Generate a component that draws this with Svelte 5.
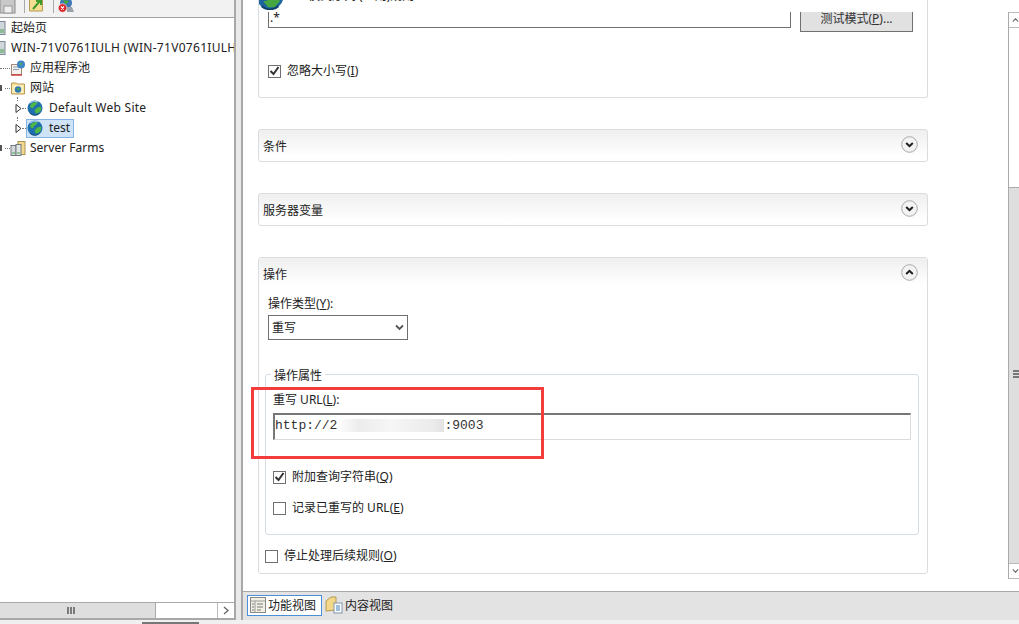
<script>
  const tree = [
    { id: 'pool', label: '应用程序池' },
    { id: 'sites', label: '网站' }
  ];
</script>

{#snippet chev(up)}
  <span class="chev">
    <svg width="17" height="17" viewBox="0 0 17 17">
      <circle cx="8.500" cy="8.500" r="7.800" fill="#f3f3f3" stroke="#a8a8a8"/>
      <path d={up ? 'M5.200 10l3.300-3.200 3.300 3.200' : 'M5.200 7l3.300 3.200 3.300-3.200'} stroke="#1e1e1e" stroke-width="2" fill="none"/>
    </svg>
  </span>
{/snippet}

{#snippet globe()}
  <svg class="globe" width="16" height="16" viewBox="0 0 17 17">
    <circle cx="8.500" cy="8.500" r="8" fill="#1f6fae"/>
    <path d="M3 6l3-3 4-1 1 2-3 2-2 3-2-1zM11 8l4-1 0 4-3 3-3 0-1-3z" fill="#4fb648"/>
    <path d="M3 3.500a8 8 0 0 1 9-1.500" stroke="#b4dcf5" fill="none"/>
    <path d="M3 14a8 8 0 0 0 10 .5" stroke="#0f4674" fill="none"/>
  </svg>
{/snippet}

<div class="app">
  <div class="upper">
    <aside class="left">
      <div class="toolbar">
        <svg class="tb floppy" width="16" height="14" viewBox="0 0 16 14"><rect x="0" y="-3" width="15" height="16" fill="#c8c8c8" stroke="#8c8c8c"/><rect x="4" y="6" width="8" height="7" fill="#efefef" stroke="#9a9a9a"/></svg>
        <i class="sep s1"></i>
        <svg class="tb folder" width="15" height="12" viewBox="0 0 15 12"><path d="M.5-2h13v13H.5z" fill="#f5dd92" stroke="#b49a54"/><path d="M4 9l7-8M7 1h5v4" stroke="#3f9a2d" stroke-width="2" fill="none"/></svg>
        <i class="sep s2"></i>
        <svg class="tb earth" width="16" height="14" viewBox="0 0 16 14"><circle cx="8" cy="3" r="6" fill="#3b78b8"/><path d="M5 0l6 1-3 4z" fill="#48a83f"/><path d="M9 7h5l2 5H9z" fill="#9aa3ad"/><circle cx="4.500" cy="8" r="4.300" fill="#d8262c" stroke="#fff" stroke-width="0.600"/><path d="M3 6.500l3 3M6 6.500l-3 3" stroke="#fff" stroke-width="1.200"/></svg>
      </div>
      <div class="tree">
        <div class="row top">
          <svg class="ic" width="16" height="16" viewBox="0 0 16 16"><rect x="7" y="1.500" width="8" height="13" fill="#cfd6dc" stroke="#7d8894"/><path d="M9 10h5M9 12h5" stroke="#4aa050"/></svg>
          <span class="t">起始页</span>
        </div>
        <div class="row top">
          <svg class="ic" width="16" height="16" viewBox="0 0 16 16"><rect x="7" y="1.500" width="8" height="13" fill="#cfd6dc" stroke="#7d8894"/><path d="M9 10h5M9 12h5" stroke="#4aa050"/></svg>
          <span class="t clip">WIN-71V0761IULH (WIN-71V0761IULH\Administrator)</span>
        </div>
        {#each tree as t}
          <div class="row node">
            {#if t.id === 'sites'}<i class="stub"></i><i class="dots d5"></i>{:else}<i class="dots"></i>{/if}
            {#if t.id === 'pool'}
              <svg width="16" height="16" viewBox="0 0 16 16"><rect x="1.500" y="4.500" width="10" height="10" fill="#f4f1ec" stroke="#a68a80"/><path d="M3 7h6M3 9.500h6" stroke="#8aa0b5"/><path d="M1 15h11" stroke="#c9403a" stroke-width="1.500"/><circle cx="11" cy="4.500" r="4" fill="#3c86c6"/><path d="M9 3h3l-1 3z" fill="#58b14a"/></svg>
            {:else}
              <svg width="16" height="16" viewBox="0 0 16 16"><path d="M1.500 3h5l1 1h7v10h-13z" fill="#f6dd96" stroke="#b79a55"/><path d="M2.500 5h11v8h-11z" fill="#fbeeb9"/><circle cx="8" cy="9.500" r="3.200" fill="#2f78b5"/><path d="M6.500 8h3l-1 3z" fill="#4fae45"/></svg>
            {/if}
            <span class="t l4">{t.label}</span>
          </div>
        {/each}
        <div class="row site">
          <svg class="tri" width="7" height="9" viewBox="0 0 7 9"><path d="M1 .5l5 4-5 4z" fill="#fff" stroke="#333"/></svg>
          <i class="dots short"></i>
          {@render globe()}
          <span class="lbl wide">Default Web Site</span>
        </div>
        <div class="row site">
          <svg class="tri" width="7" height="9" viewBox="0 0 7 9"><path d="M1 .5l5 4-5 4z" fill="#fff" stroke="#333"/></svg>
          <i class="dots short"></i>
          <span class="sel">
            {@render globe()}
            <span class="lbl">test</span>
          </span>
        </div>
        <div class="row node">
          <i class="stub"></i><i class="dots d5"></i>
          <svg width="16" height="16" viewBox="0 0 16 16"><rect x="8" y="1.500" width="7" height="13" fill="#f2d98e" stroke="#a89456"/><rect x="1" y="5.500" width="5" height="10" fill="#d7dadd" stroke="#70787f"/><rect x="6" y="4.500" width="5" height="11" fill="#e3e5e7" stroke="#70787f"/><path d="M2 13h3M7 13h3" stroke="#3fa648"/></svg>
          <span class="t l4">Server Farms</span>
        </div>
      </div>
      <div class="hbar">
        <div class="hthumb"><span class="grip"><i></i><i></i><i></i></span></div>
        <div class="htrack"></div>
        <div class="hbtn"><svg width="8" height="9" viewBox="0 0 8 9"><path d="M2 1l4 3.500-4 3.500" stroke="#666" stroke-width="1.300" fill="none"/></svg></div>
      </div>
    </aside>

    <main class="main">
      <div class="scroll">
        <div class="col">
          <section class="card first">
            <div class="pattern-head">
              <svg class="bigglobe" width="28" height="28" viewBox="0 0 30 30"><circle cx="15" cy="15" r="14.500" fill="#1e659f"/><path d="M5 12l8-6 6 4-4 6-6 1zM8 21l12-4 6 3-6 7-7 0z" fill="#46a640"/><path d="M6 26a14 14 0 0 0 18 0" stroke="#0e3f6b" stroke-width="2" fill="none"/></svg>
              <span class="cliptext">模式序列 (正则)规则</span>
            </div>
            <div class="pattern-row">
              <div class="input">.*</div>
              <div class="btn">测试模式(<u>P</u>)...</div>
            </div>
            <label class="check ignore"><span class="box on"><svg width="11" height="10" viewBox="0 0 11 10"><path d="M1.500 5l3 3 5-7" stroke="#333" stroke-width="2" fill="none"/></svg></span><span>忽略大小写(<u>I</u>)</span></label>
          </section>

          <section class="card bar"><span>条件</span>{@render chev(false)}</section>
          <section class="card bar"><span>服务器变量</span>{@render chev(false)}</section>

          <section class="card action">
            <div class="bar inner"><span>操作</span>{@render chev(true)}</div>
            <div class="body">
              <div class="fl">操作类型(<u>Y</u>):</div>
              <div class="select"><span>重写</span><svg width="9" height="7" viewBox="0 0 9 7"><path d="M1 1.500l3.500 3.500 3.500-3.500" stroke="#555" stroke-width="1.800" fill="none"/></svg></div>
              <fieldset class="props">
                <legend>操作属性</legend>
                <div class="fl url">重写 URL(<u>L</u>):</div>
                <div class="urlinput"><span class="mono">http://2</span><span class="blur"></span><span class="mono">:9003</span></div>
                <label class="check c1"><span class="box on"><svg width="11" height="10" viewBox="0 0 11 10"><path d="M1.500 5l3 3 5-7" stroke="#333" stroke-width="2" fill="none"/></svg></span><span>附加查询字符串(<u>Q</u>)</span></label>
                <label class="check c2"><span class="box"></span><span>记录已重写的 URL(<u>E</u>)</span></label>
              </fieldset>
              <label class="check c3"><span class="box"></span><span>停止处理后续规则(<u>O</u>)</span></label>
            </div>
          </section>
        </div>
        <div class="vbar">
          <div class="vbtn"><svg width="9" height="6" viewBox="0 0 9 6"><path d="M1 5l3.500-3.500 3.500 3.500" stroke="#666" stroke-width="1.300" fill="none"/></svg></div>
          <div class="vtrack"></div>
          <div class="vthumb"><span class="vgrip"><i></i><i></i><i></i></span></div>
          <div class="vbtn"><svg width="9" height="6" viewBox="0 0 9 6"><path d="M1 1l3.500 3.500 3.500-3.500" stroke="#666" stroke-width="1.300" fill="none"/></svg></div>
        </div>
        <div class="redbox"></div>
      </div>
      <div class="tabs">
        <div class="tab active">
          <svg width="16" height="16" viewBox="0 0 16 16"><rect x=".5" y=".5" width="15" height="15" fill="#f2f0e4" stroke="#888"/><path d="M.5 4h15M5 4v12" stroke="#999"/><path d="M7 7h6M7 10h6M7 13h4M2 7h2M2 10h2M2 13h2" stroke="#777"/></svg>
          <span>功能视图</span>
        </div>
        <div class="tab">
          <svg width="18" height="18" viewBox="0 0 18 18"><path d="M1 15V5l5-4h5v13z" fill="#f3d88a" stroke="#b59a55"/><rect x="9" y="7" width="8" height="10" fill="#fff" stroke="#7f95ad"/><path d="M11 10h4M11 12h4M11 14h4" stroke="#3f7fbf"/></svg>
          <span>内容视图</span>
        </div>
      </div>
    </main>
  </div>
  <div class="status"><i></i></div>
</div>

<style>
  :global(body) { margin: 0; }
  .app {
    width: 1019px; height: 624px; overflow: hidden;
    display: flex; flex-direction: column;
    background: #e9e9e9;
    font: 12px/16px "Noto Sans", "Noto Sans CJK SC", sans-serif;
    color: #222;
  }
  u { text-underline-offset: 1px; }
  .upper { flex: 0 0 620px; display: flex; min-height: 0; }

  .left { width: 234px; flex: none; display: flex; flex-direction: column; background: #fff; border-right: 2px solid #a8a8a8; }
  .toolbar { height: 18px; flex: none; display: flex; align-items: flex-start; border-bottom: 1px solid #a4a4a4; box-sizing: border-box; background: #f2f2f2; overflow: hidden; }
  .tb { flex: none; }
  .sep { width: 1px; height: 13px; background: #a9a9a9; flex: none; }
  .s1 { margin-left: 8px; }
  .folder { margin-left: 4px; }
  .s2 { margin-left: 9px; }
  .earth { margin-left: 4px; }
  .tree { flex: 1; overflow: hidden; }
  .row { display: flex; align-items: center; white-space: nowrap; height: 20px; }
  .top { margin-left: -10px; }
  .ic { flex: none; }
  .t { margin-left: 5px; }
  .l4 { margin-left: 4px; }
  .clip { overflow: hidden; letter-spacing: .3px; }
  .dots { display: inline-block; width: 10px; border-top: 1px dotted #777; flex: none; }
  .stub { width: 2px; height: 6px; background: #555; flex: none; margin-right: 3px; }
  .d5 { width: 5px; }
  .short { width: 4px; margin: 0 1px 0 0; }
  .site { padding-left: 15px; position: relative; }
  .site::before { content: ""; position: absolute; left: 17px; top: -1px; height: 4px; border-left: 1px dotted #777; }
  .tri { flex: none; }
  .globe { flex: none; }
  .lbl { margin-left: 6px; }
  .wide { letter-spacing: .25px; }
  .sel { display: inline-flex; align-items: center; height: 19px; width: 48px; background: #cfe3f8; border: 1px solid #85b3e4; box-sizing: border-box; margin-left: -1px; }
  .hbar { height: 18px; flex: none; display: flex; border-top: 1px solid #a8a8a8; border-bottom: 2px solid #a8a8a8; box-sizing: border-box; }
  .hthumb { width: 156px; background: #dedede; border-right: 1px solid #aaa; display: flex; align-items: center; padding-left: 67px; box-sizing: border-box; }
  .grip { display: flex; gap: 1px; }
  .grip i { width: 2px; height: 7px; background: #7a7a7a; }
  .htrack { flex: 1; background: #fff; }
  .hbtn { width: 16px; flex: none; display: flex; align-items: center; justify-content: center; border-left: 1px solid #bbb; background: #fff; }

  .main { flex: 1; min-width: 0; display: flex; flex-direction: column; margin-left: 5px; border-left: 2px solid #a8a8a8; }
  .scroll { flex: 0 0 592px; display: flex; background: #fff; border-bottom: 1px solid #a8a8a8; box-sizing: border-box; position: relative; overflow: hidden; }
  .col { width: 670px; margin-left: 15px; flex: none; display: flex; flex-direction: column; gap: 31px; }
  .card { border: 1px solid #d9dde0; border-radius: 3px; background: #fff; box-sizing: border-box; }
  .first { height: 98px; border-top: none; border-radius: 0 0 3px 3px; position: relative; }
  .pattern-head { height: 12px; overflow: hidden; position: relative; }
  .bigglobe { position: absolute; left: -3px; top: -18px; }
  .cliptext { position: absolute; left: 49px; top: -12px; }
  .pattern-row { display: flex; align-items: flex-start; padding-left: 9px; gap: 9px; }
  .input { width: 523px; height: 16px; border: 1px solid #707070; border-top: none; box-sizing: border-box; line-height: 12px; padding-left: 1px; }
  .btn { width: 113px; height: 20px; border: 1px solid #707070; border-top: none; background: #e1e1e1; box-sizing: border-box; text-align: center; line-height: 14px; color: #333; }
  .check { display: flex; align-items: center; gap: 6px; height: 16px; }
  .box { width: 13px; height: 13px; border: 1px solid #707070; box-sizing: border-box; display: flex; align-items: center; justify-content: center; background: #fff; flex: none; }
  .ignore { margin: 31px 0 0 9px; }

  .bar { height: 33px; display: flex; align-items: center; justify-content: space-between; padding: 2px 9px 0 4px;
    background: linear-gradient(#efefef, #fff 85%); box-sizing: border-box; }
  .chev { display: flex; margin-top: -5px; }
  .action { height: 317px; }
  .inner { height: 32px; }
  .body { padding: 6px 0 0 9px; }
  .fl { height: 16px; }
  .select { width: 140px; height: 25px; margin-top: 3px; border: 1px solid #707070; box-sizing: border-box; display: flex; align-items: center; justify-content: space-between; padding: 0 3px; }
  .props { margin: 25px 8px 0 -3px; padding: 9px 6px 0 7px; height: 170px; border: 1px solid #d5dde5; border-radius: 3px; box-sizing: border-box; }
  .props legend { padding: 4px 3px 0; margin-left: -2px; line-height: 14px; }
  .url { margin-top: 0; }
  .urlinput { width: 638px; height: 27px; margin: 5px 0 0; border: 1px solid #dcdcdc; border-top: 2px solid #777; border-left: 2px solid #777; box-sizing: border-box; display: flex; align-items: center; padding-bottom: 3px; }
  .mono { font: 13px "Liberation Mono", monospace; color: #333; }
  .blur { width: 107px; height: 13px; background: linear-gradient(90deg, #fff, #ececec 20%, #f6f6f6 50%, #ebebeb 90%, #e3e3e3); }
  .c1 { margin-top: 29px; }
  .c2 { margin-top: 15px; }
  .c3 { margin: 13px 0 0 -3px; }

  .vbar { position: absolute; right: 0; top: 12px; bottom: 12px; width: 10px; display: flex; flex-direction: column; border-left: 1px solid #aaa; }
  .vbtn { height: 16px; flex: none; display: flex; align-items: center; background: #fff; border-bottom: 1px solid #bbb; border-top: 1px solid #bbb; box-sizing: border-box; padding-left: 3px; overflow: hidden; }
  .vtrack { height: 159px; background: #fff; }
  .vthumb { flex: 1; background: #dedede; position: relative; border-top: 1px solid #aaa; }
  .vgrip { position: absolute; left: 4px; top: 182px; display: flex; flex-direction: column; gap: 1px; }
  .vgrip i { width: 6px; height: 2px; background: #777; }
  .redbox { position: absolute; left: 8px; top: 387px; width: 293px; height: 72px; border: 3px solid #f33c3c; box-sizing: border-box; }

  .tabs { flex: 1; display: flex; align-items: center; background: #e3e3e3; gap: 3px; padding: 0 0 2px 4px; }
  .tab { display: flex; align-items: center; gap: 2px; height: 21px; }
  .tab span { padding-top: 1px; }
  .tab.active { border: 1px solid #4a90d9; background: #fff; padding: 0 5px 0 2px; gap: 2px; box-sizing: border-box; }
  .status { flex: 1; background: #f0f0f0; position: relative; }
  .status i { position: absolute; left: 142px; top: 2px; width: 57px; height: 2px; background: #777; }
</style>
